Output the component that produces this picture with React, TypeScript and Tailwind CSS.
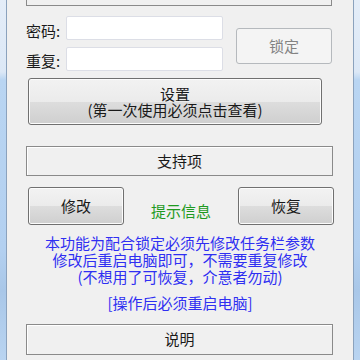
const font = { fontFamily: '"Noto Sans CJK SC", "Noto Sans", sans-serif' }

function WinButton({ children, className = "" }: { children: React.ReactNode; className?: string }) {
  return (
    <div
      className={
        "flex flex-col items-center justify-center rounded-[3px] border border-[#707070] bg-[linear-gradient(to_bottom,#f2f2f2_0%,#ebebeb_50%,#dddddd_51%,#cfcfcf_100%)] text-[15px] text-[#1a1a1a] shadow-[inset_0_0_0_1px_#fcfcfc] " +
        className
      }
    >
      {children}
    </div>
  )
}

function Frame({ children, className = "" }: { children?: React.ReactNode; className?: string }) {
  return (
    <div
      className={
        "flex items-center justify-center border border-[#8a8a8a] bg-[#f0f0f0] text-[15px] text-[#1a1a1a] shadow-[inset_1px_1px_0_#ffffff] " +
        className
      }
    >
      {children}
    </div>
  )
}

export default function App() {
  return (
    <div className="flex h-[360px] w-[360px] overflow-hidden" style={font}>
      <div className="w-[7px] border-r border-[#8ba2bd] bg-[linear-gradient(to_bottom,#e4edf8_0px,#dce8f6_72px,#b9d5f2_80px,#b3d0f0_250px,#a9c7e8_290px,#b9d4f1_360px)]" />
      <main className="flex flex-1 flex-col bg-[#f0f0f0]">
        <div className="ml-[19px] h-[6px] w-[306px] border-x border-b border-[#8a8a8a]" />

        <div className="mt-[10px] flex h-[55px]">
          <div className="ml-[19px] flex flex-col gap-[7px]">
            <div className="flex h-[24px] items-center">
              <span className="w-[40px] pt-[6px] text-[15px] text-[#1a1a1a]">密码:</span>
              <div className="h-[24px] w-[157px] rounded-[2px] border border-[#dcdee6] bg-white" />
            </div>
            <div className="flex h-[24px] items-center">
              <span className="w-[40px] pt-[4px] text-[15px] text-[#1a1a1a]">重复:</span>
              <div className="h-[24px] w-[157px] rounded-[2px] border border-[#dcdee6] bg-white" />
            </div>
          </div>
          <div className="ml-[13px] mt-[12px] flex h-[36px] w-[96px] items-center justify-center rounded-[3px] border border-[#b5b9bd] bg-[#f4f4f4] text-[15px] text-[#838383]">
            锁定
          </div>
        </div>

        <WinButton className="ml-[21px] mt-[7px] h-[47px] w-[294px] pt-[1px] leading-[16px]">
          <span>设置</span>
          <span>(第一次使用必须点击查看)</span>
        </WinButton>

        <Frame className="ml-[19px] mt-[21px] h-[30px] w-[307px]">支持项</Frame>

        <div className="mt-[11px] flex h-[38px] items-stretch">
          <WinButton className="ml-[21px] w-[96px]">修改</WinButton>
          <div className="flex flex-1 items-end justify-center pb-[3px] text-[15px] text-[#1f9a1f]">提示信息</div>
          <WinButton className="mr-[19px] w-[96px]">恢复</WinButton>
        </div>

        <div className="mt-[9px] flex flex-col items-center text-[15px] leading-[17px] text-[#2f2ff2]">
          <span>本功能为配合锁定必须先修改任务栏参数</span>
          <span>修改后重启电脑即可，不需要重复修改</span>
          <span>(不想用了可恢复，介意者勿动)</span>
          <span className="mt-[9px]">[操作后必须重启电脑]</span>
        </div>

        <Frame className="ml-[19px] mt-[13px] h-[31px] w-[307px]">说明</Frame>
      </main>
      <div className="w-[7px] border-l border-[#8ba2bd] bg-[linear-gradient(to_bottom,#e4edf8_0px,#dce8f6_72px,#b9d5f2_80px,#b3d0f0_250px,#a9c7e8_290px,#b9d4f1_360px)]" />
    </div>
  )
}
